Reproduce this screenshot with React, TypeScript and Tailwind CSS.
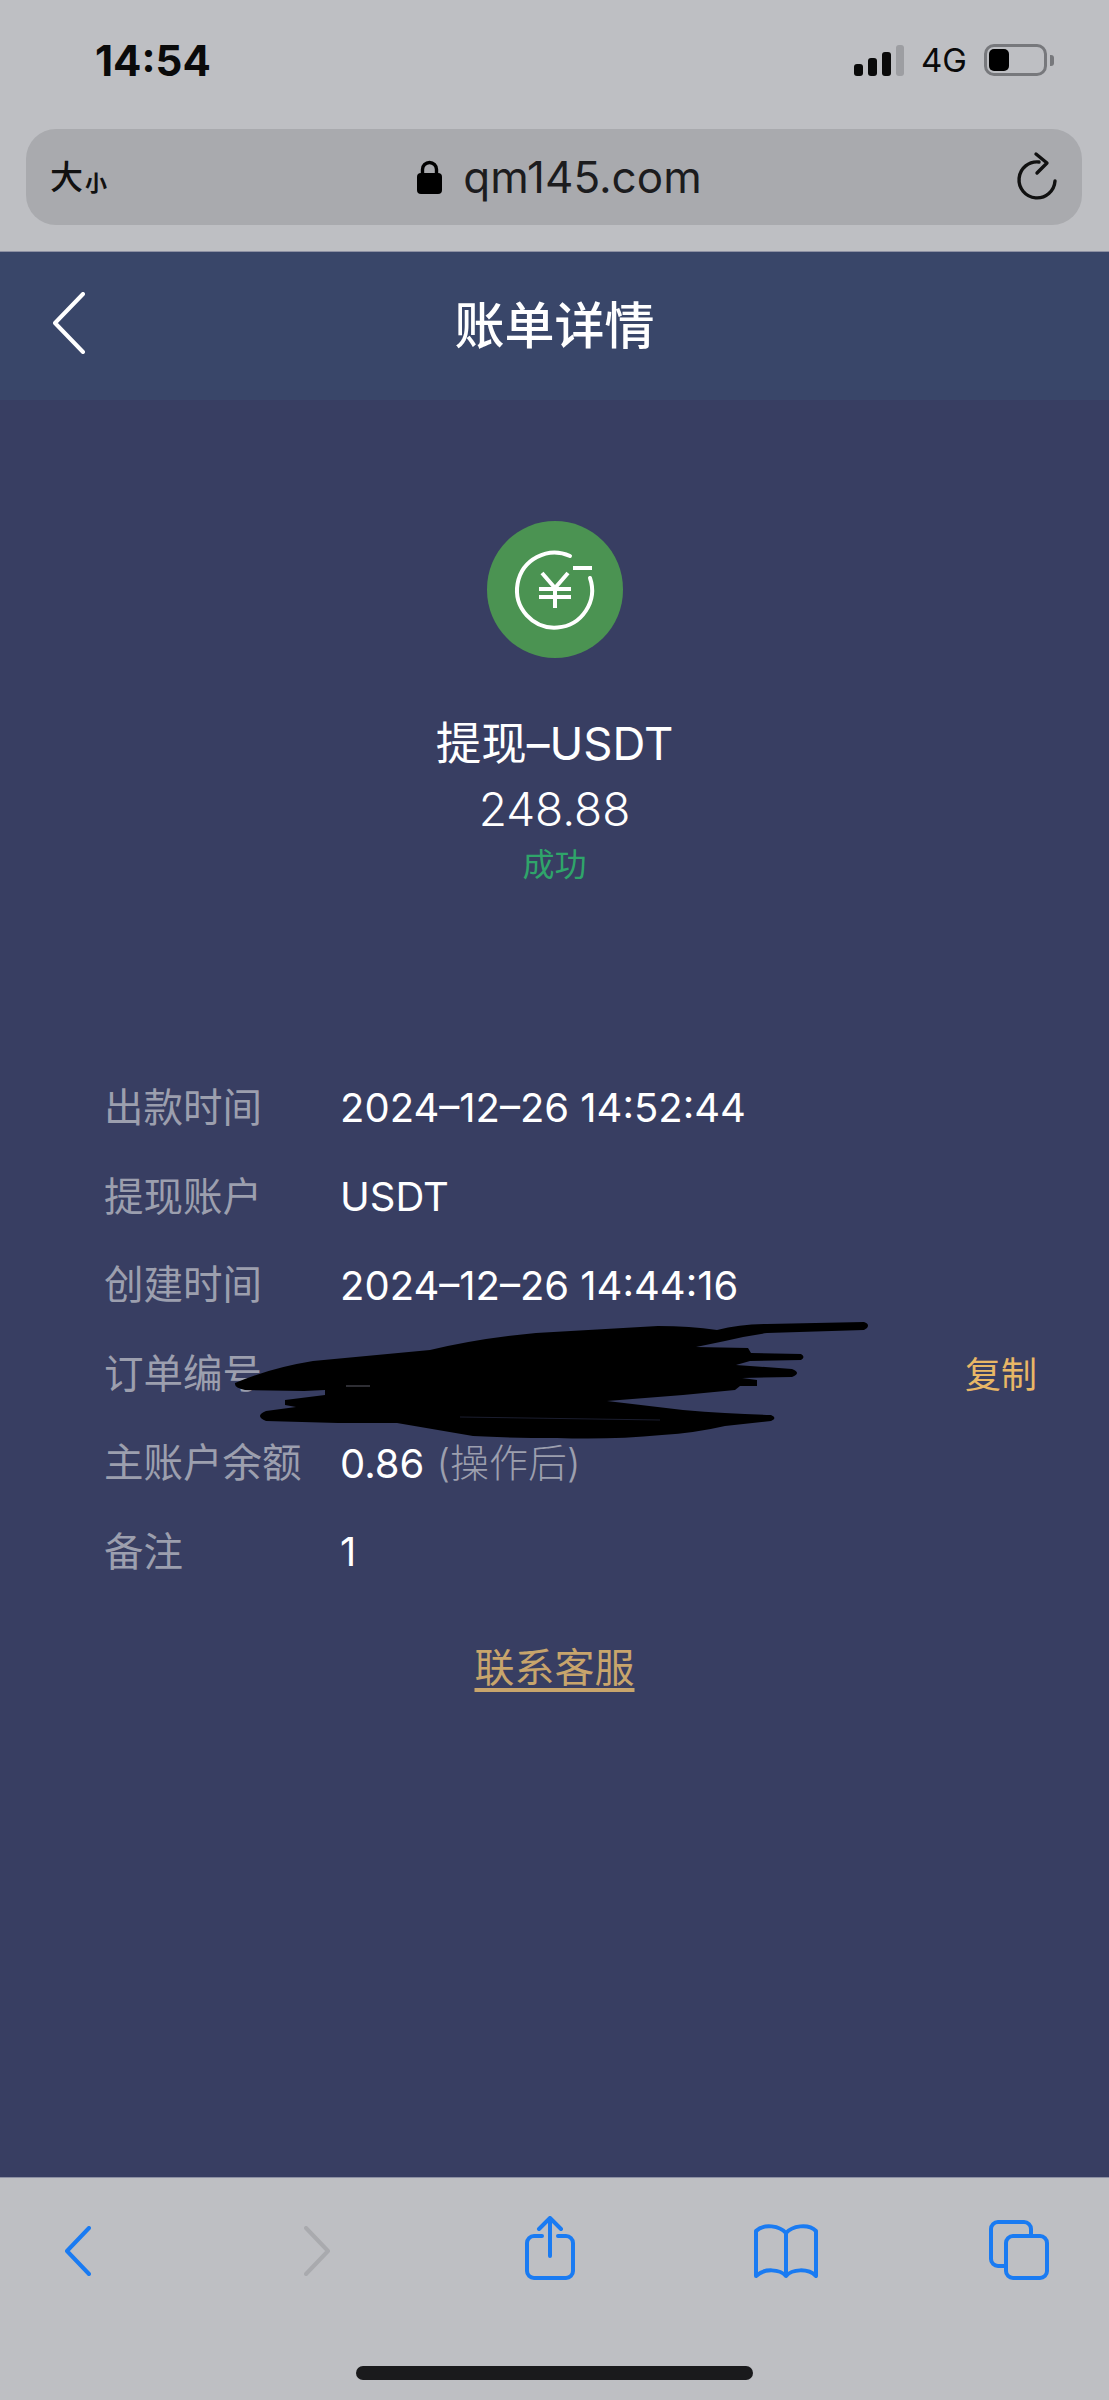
import React from "react";

const rows = [
  { label: "出款时间", value: "2024–12–26 14:52:44" },
  { label: "提现账户", value: "USDT" },
  { label: "创建时间", value: "2024–12–26 14:44:16" },
  { label: "订单编号", value: "", copy: true },
  { label: "主账户余额", value: "0.86", note: "(操作后)" },
  { label: "备注", value: "1" },
];

const Scribble = () => (
  <svg width="660" height="140" viewBox="0 0 660 140" className="absolute left-[116px] top-[-22px]">
    <path
      fill="#000"
      d="M15 75 Q50 60 93 53 L210 42 Q260 30 316 25 L438 18 Q470 18 497 22 Q520 16 547 16 L644 14 Q650 16 647 20 L644 22 L547 25 Q525 28 505 33 L476 39 L528 40 L531 45 L581 46 Q586 49 581 52 L530 53 L516 57 L572 61 Q582 65 572 69 L522 70 L537 72 L537 78 L520 78 L515 82 L463 87 L387 93 L463 102 Q510 106 551 107 Q558 110 551 113 L505 118 Q475 125 442 127 Q390 132 337 130 Q290 130 253 128 L177 115 L118 115 L46 113 Q34 108 46 103 L76 99 L65 97 L65 92 L105 87 L105 82 L84 83 L25 82 Q14 80 15 75Z"
    />
    <path d="M126 78 L150 78" stroke="#9a9cae" strokeWidth="1" opacity="0.6" />
    <path d="M240 109 L440 112" stroke="#383e62" strokeWidth="0.8" opacity="0.6" />
  </svg>
);

export default function App() {
  return (
    <div className="flex h-[2400px] w-[1109px] flex-col overflow-hidden bg-[#383e62] font-['Inter','Noto_Sans_CJK_SC',sans-serif]">
      {/* browser top */}
      <div className="h-[252px] bg-[#bebfc3] border-b border-[#8d90a3]">
        <div className="flex h-[129px] items-start justify-between pl-[95px] pr-[55px]">
          <span className="mt-[37px] text-[42px] font-bold leading-[48px] text-[#0a0a0a]">14:54</span>
          <div className="mt-[44px] flex items-start">
            <div className="flex h-[32px] items-end gap-[5px]">
              <span className="h-[12px] w-[9px] rounded-[3px] bg-[#0a0a0a]" />
              <span className="h-[18px] w-[9px] rounded-[3px] bg-[#0a0a0a]" />
              <span className="h-[24px] w-[9px] rounded-[3px] bg-[#0a0a0a]" />
              <span className="h-[31px] w-[8px] rounded-[3px] bg-[#9d9ea2]" />
            </div>
            <span className="ml-[17px] text-[33px] leading-[32px] text-[#0a0a0a]">4G</span>
            <div className="ml-[17px] flex items-center">
              <div className="flex h-[32px] w-[63px] items-center rounded-[10px] border-[3px] border-[#77787c] pl-[2px]">
                <span className="h-[22px] w-[20px] rounded-[5px] bg-black" />
              </div>
              <span className="ml-[3px] h-[11px] w-[4px] rounded-r-[3px] bg-[#77787c]" />
            </div>
          </div>
        </div>
        <div className="relative mx-[26px] flex h-[96px] w-[1056px] items-center justify-between rounded-[30px] bg-[#a9aaae] pl-[24px] pr-[20px] text-[#111]">
          <span className="flex items-end font-medium leading-none">
            <span className="text-[33px]">大</span>
            <span className="ml-[2px] text-[22px] font-bold">小</span>
          </span>
          <span className="flex items-center text-[44px] leading-none text-[#1c1c1e]">
            <svg width="25" height="34" viewBox="0 0 25 34" className="mr-[21px]">
              <path d="M5.5 15 V9.5 a7 7 0 0 1 14 0 V15" fill="none" stroke="#000" strokeWidth="3.4" />
              <rect x="0" y="13" width="25" height="21" rx="4" fill="#000" />
            </svg>
            qm145.com
          </span>
          <svg width="50" height="60" viewBox="0 0 50 60" fill="none" stroke="#111" strokeWidth="3.4" strokeLinecap="round" strokeLinejoin="round" className="mt-[6px]">
            <path d="M27 12 A18 18 0 1 0 43 31" />
            <path d="M24 4 L35 13 L25 23" />
          </svg>
        </div>
      </div>

      {/* page header */}
      <div className="flex h-[148px] items-center bg-[#394669] relative justify-center">
        <svg width="32" height="62" viewBox="0 0 32 62" fill="none" stroke="#fff" strokeWidth="4" strokeLinecap="round" strokeLinejoin="round" className="absolute left-[53px] top-[40px]">
          <path d="M30 2 L2 31 L30 60" />
        </svg>
        <h1 className="text-[50px] font-medium leading-none text-white">账单详情</h1>
      </div>

      {/* body */}
      <div className="flex flex-1 flex-col">
        <div className="flex flex-col items-center pt-[121px]">
          <div className="flex h-[137px] w-[136px] items-center justify-center rounded-full bg-[#4b9352]">
            <svg width="90" height="90" viewBox="0 0 90 90" fill="none" stroke="#fff" strokeLinecap="round">
              <path d="M60 11 A37.5 37.5 0 1 0 80 33" strokeWidth="4" />
              <path d="M63 23 H82" strokeWidth="4" strokeLinecap="butt" />
              <path d="M32 28 L45 43 L58 28 M45 43 V63 M29 44 H61 M29 52 H61" strokeWidth="4" strokeLinecap="butt" />
            </svg>
          </div>
          <div className="mt-[58px] text-[45.5px] leading-[56px] text-white">提现–USDT</div>
          <div className="mt-[10px] text-[46px] font-light leading-[54px] text-white">248.88</div>
          <div className="mt-[10px] text-[32px] leading-[38px] text-[#2fa56a]">成功</div>
        </div>

        <div className="mt-[180px] flex flex-col pl-[104px] pr-[72px]">
          {rows.map((row) => (
            <div key={row.label} className="relative flex h-[88.8px] items-center text-[39.5px]">
              <span className="w-[236px] shrink-0 text-[#9c9fae]">{row.label}</span>
              <span className="text-[40px] text-white">{row.value}</span>
              {row.note && <span className="ml-[12px] text-[39px] font-light text-[#9c9fae]">{row.note}</span>}
              {row.copy && (
                <>
                  <Scribble />
                  <span className="ml-auto text-[36px] text-[#e8b766]">复制</span>
                </>
              )}
            </div>
          ))}
        </div>

        <div className="mt-[46px] flex justify-center">
          <a className="text-[40px] leading-[50px] text-[#c8a56c] underline underline-offset-[6px]">联系客服</a>
        </div>
      </div>

      {/* browser bottom */}
      <div className="h-[223px] border-t border-[#8d90a3] bg-[#bebfc3]">
        <div className="grid h-[104px] grid-cols-[240px_221px_229px_235px_60px] items-start pl-[64px] pt-[38px]">
          <svg width="27" height="50" viewBox="0 0 27 50" fill="none" stroke="#1a7bf2" strokeWidth="4" strokeLinecap="round" strokeLinejoin="round" className="mt-[10px]">
            <path d="M25 2 L3 25 L25 48" />
          </svg>
          <svg width="27" height="50" viewBox="0 0 27 50" fill="none" stroke="#a9aaae" strokeWidth="4" strokeLinecap="round" strokeLinejoin="round" className="mt-[10px]">
            <path d="M2 2 L24 25 L2 48" />
          </svg>
          <svg width="50" height="64" viewBox="0 0 50 64" fill="none" stroke="#1a7bf2" strokeWidth="4" strokeLinecap="round" strokeLinejoin="round">
            <path d="M17 20 H9 a7 7 0 0 0 -7 7 V55 a7 7 0 0 0 7 7 H41 a7 7 0 0 0 7 -7 V27 a7 7 0 0 0 -7 -7 H33" />
            <path d="M25 2 V40 M14 13 L25 2 L36 13" />
          </svg>
          <svg width="64" height="56" viewBox="0 0 64 56" fill="none" stroke="#1a7bf2" strokeWidth="4" strokeLinecap="round" strokeLinejoin="round" className="mt-[7px]">
            <path d="M32 10 C26 3 10 0 2 8 V53 C10 45 26 46 32 53 C38 46 54 45 62 53 V8 C54 0 38 3 32 10 Z M32 10 V53" />
          </svg>
          <svg width="60" height="60" viewBox="0 0 60 60" fill="none" stroke="#1a7bf2" strokeWidth="4" strokeLinecap="round" strokeLinejoin="round" className="mt-[4px]">
            <path d="M15 46 H9 a7 7 0 0 1 -7 -7 V9 a7 7 0 0 1 7 -7 H35 a7 7 0 0 1 7 7 V16" />
            <rect x="17" y="16" width="41" height="42" rx="7" />
          </svg>
        </div>
        <div className="mx-auto mt-[84px] h-[14px] w-[397px] rounded-full bg-[#1a1a1c]" />
      </div>
    </div>
  );
}
